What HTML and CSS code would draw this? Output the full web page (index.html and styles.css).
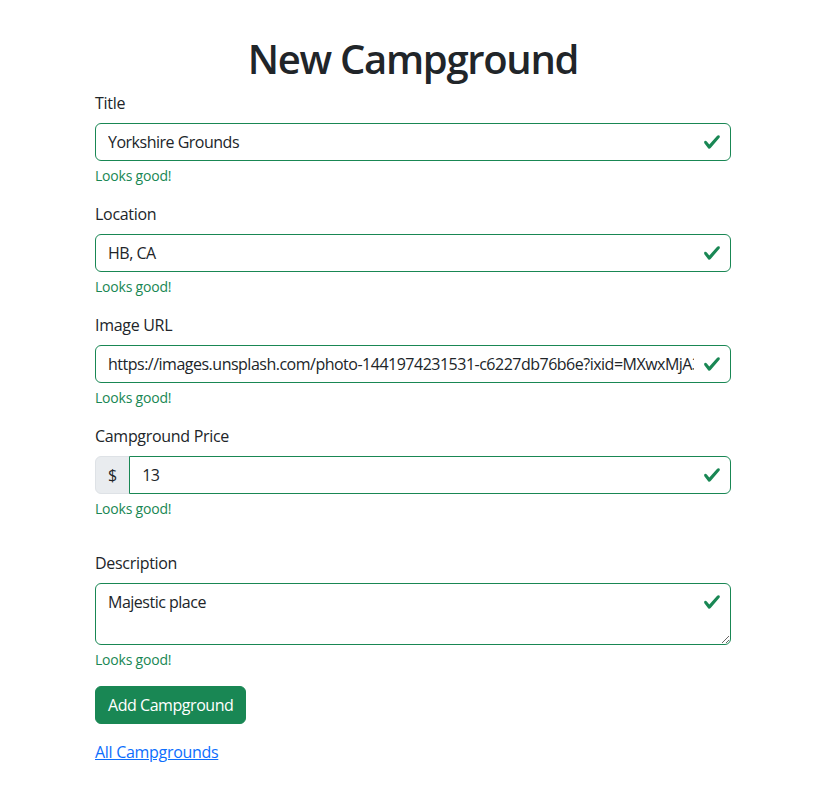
FILE: index.html
```html
<!DOCTYPE html>
<html lang="en">
<head>
<meta charset="utf-8">
<title>New Campground</title>
<link rel="stylesheet" href="styles.css">
</head>
<body>
<div class="page">
  <main class="form-col">
    <h1 class="heading">New Campground</h1>
    <form class="form">
      <div class="field">
        <label class="label">Title</label>
        <div class="control">
          <input class="input" type="text" value="Yorkshire Grounds">
          <svg class="check" viewBox="0 0 8 8"><path d="M2.3 6.73.6 4.53c-.4-1.04.46-1.4 1.1-.8l1.1 1.4 3.4-3.8c.6-.63 1.6-.27 1.2.7l-4 4.6c-.43.5-.8.4-1.1.1z"/></svg>
        </div>
        <div class="feedback">Looks good!</div>
      </div>
      <div class="field">
        <label class="label">Location</label>
        <div class="control">
          <input class="input" type="text" value="HB, CA">
          <svg class="check" viewBox="0 0 8 8"><path d="M2.3 6.73.6 4.53c-.4-1.04.46-1.4 1.1-.8l1.1 1.4 3.4-3.8c.6-.63 1.6-.27 1.2.7l-4 4.6c-.43.5-.8.4-1.1.1z"/></svg>
        </div>
        <div class="feedback">Looks good!</div>
      </div>
      <div class="field">
        <label class="label">Image URL</label>
        <div class="control">
          <input class="input" type="text" value="https://images.unsplash.com/photo-1441974231531-c6227db76b6e?ixid=MXwxMjA3fDB8MHxwaG90by1wYWdlfHx8fGVufDB8fHw%3D">
          <svg class="check" viewBox="0 0 8 8"><path d="M2.3 6.73.6 4.53c-.4-1.04.46-1.4 1.1-.8l1.1 1.4 3.4-3.8c.6-.63 1.6-.27 1.2.7l-4 4.6c-.43.5-.8.4-1.1.1z"/></svg>
        </div>
        <div class="feedback">Looks good!</div>
      </div>
      <div class="field">
        <label class="label">Campground Price</label>
        <div class="group">
          <span class="addon">$</span>
          <div class="control grow">
            <input class="input input-joined" type="text" value="13">
            <svg class="check" viewBox="0 0 8 8"><path d="M2.3 6.73.6 4.53c-.4-1.04.46-1.4 1.1-.8l1.1 1.4 3.4-3.8c.6-.63 1.6-.27 1.2.7l-4 4.6c-.43.5-.8.4-1.1.1z"/></svg>
          </div>
        </div>
        <div class="feedback">Looks good!</div>
      </div>
      <div class="field field-gap">
        <label class="label">Description</label>
        <div class="control">
          <textarea class="input textarea">Majestic place</textarea>
          <svg class="check check-top" viewBox="0 0 8 8"><path d="M2.3 6.73.6 4.53c-.4-1.04.46-1.4 1.1-.8l1.1 1.4 3.4-3.8c.6-.63 1.6-.27 1.2.7l-4 4.6c-.43.5-.8.4-1.1.1z"/></svg>
        </div>
        <div class="feedback">Looks good!</div>
      </div>
      <div class="field">
        <button class="btn" type="button">Add Campground</button>
      </div>
    </form>
    <a class="link" href="#">All Campgrounds</a>
  </main>
</div>
</body>
</html>
```
FILE: styles.css
```css
html, body {
  margin: 0;
  padding: 0;
  background: #fff;
}
body {
  font-family: "Open Sans", "Noto Sans", "Liberation Sans", sans-serif;
  font-size: 16px;
  line-height: 1.5;
  color: #212529;
}
.page {
  display: flex;
  justify-content: center;
  padding-left: 4px;
}
.form-col {
  width: 636px;
}
.heading {
  margin: 35px 0 8px;
  font-size: 40px;
  font-weight: 600;
  line-height: 1.2;
  text-align: center;
  letter-spacing: -1.3px;
}
.form {
  margin: 0;
}
.field {
  margin-bottom: 16px;
}
.field-gap {
  margin-top: 32px;
}
.label {
  display: block;
  margin-bottom: 8px;
  letter-spacing: -0.3px;
}
.control {
  position: relative;
}
.grow {
  flex: 1;
  margin-left: -1px;
  z-index: 1;
}
.input {
  display: block;
  box-sizing: border-box;
  width: 100%;
  height: 38px;
  padding: 6px 36px 6px 12px;
  font: inherit;
  letter-spacing: -0.5px;
  color: #212529;
  background: #fff;
  border: 1px solid #198754;
  border-radius: 6px;
  outline: none;
}
.textarea {
  height: 62px;
  resize: vertical;
}
.check {
  position: absolute;
  right: 10px;
  top: 10px;
  width: 18px;
  height: 18px;
  fill: #198754;
}
.check-top {
  top: 10px;
}
.group {
  display: flex;
}
.addon {
  display: flex;
  align-items: center;
  box-sizing: border-box;
  height: 38px;
  padding: 6px 12px;
  background: #e9ecef;
  border: 1px solid #dee2e6;
  border-radius: 6px 0 0 6px;
  color: #212529;
}
.input-joined {
  border-radius: 0 6px 6px 0;
}
.feedback {
  margin-top: 4px;
  font-size: 14px;
  color: #198754;
  letter-spacing: -0.2px;
}
.btn {
  display: inline-block;
  height: 38px;
  padding: 6px 12px;
  font: inherit;
  letter-spacing: -0.45px;
  color: #fff;
  background: #198754;
  border: 1px solid #198754;
  border-radius: 6px;
  cursor: pointer;
}
.link {
  color: #0d6efd;
  text-decoration: underline;
  letter-spacing: -0.3px;
}
```
